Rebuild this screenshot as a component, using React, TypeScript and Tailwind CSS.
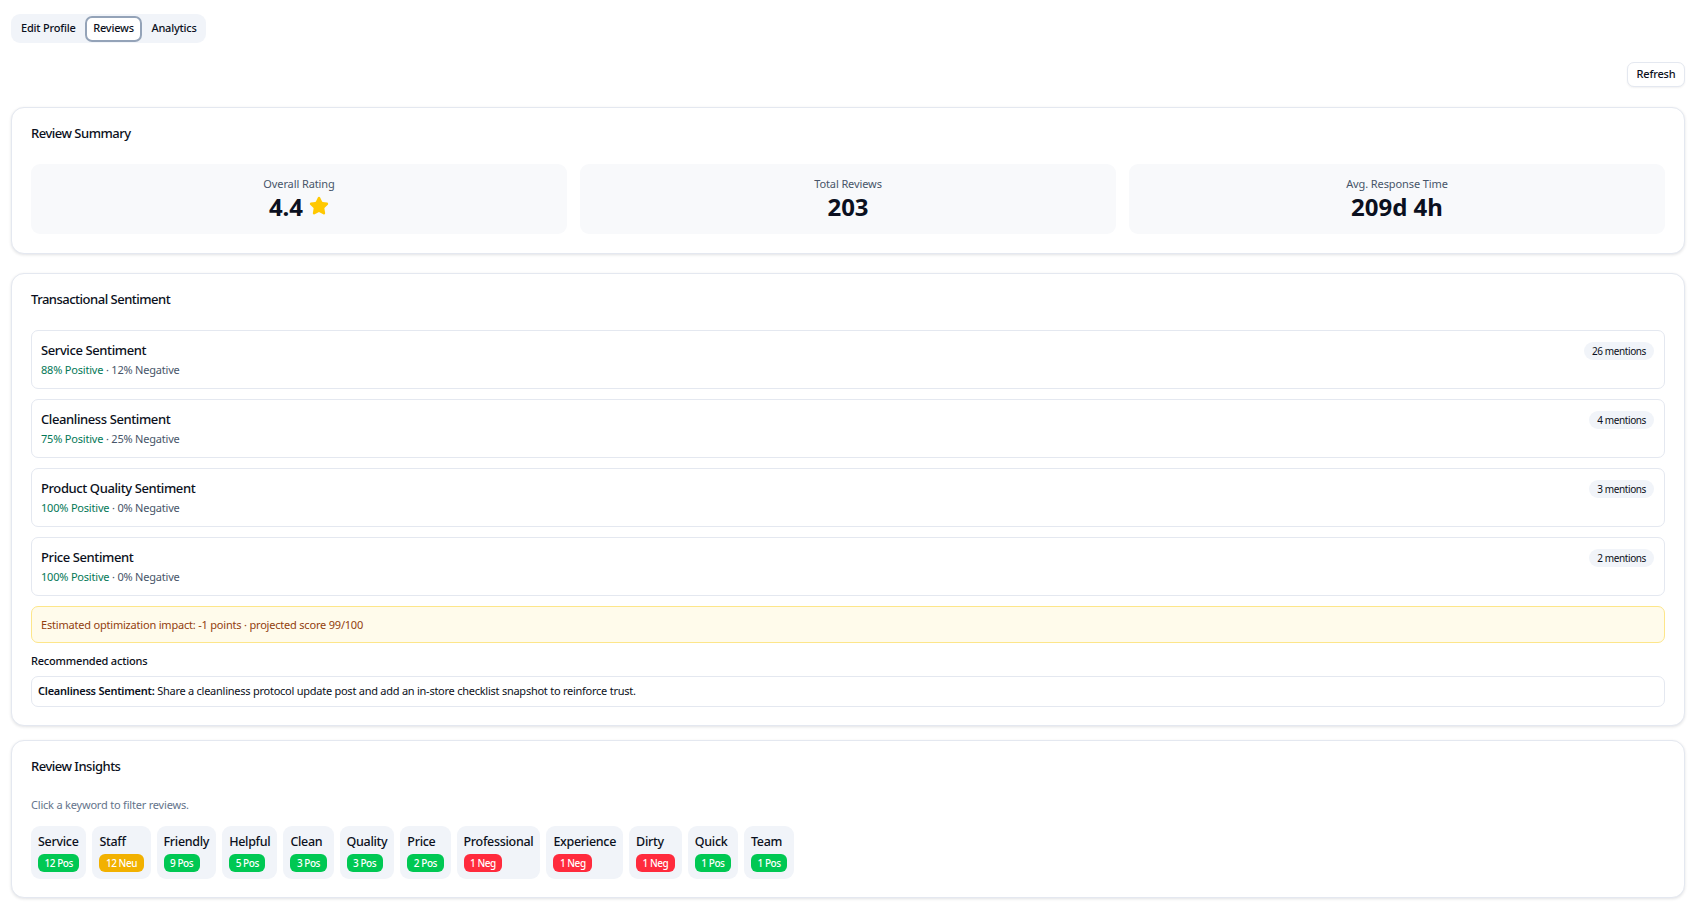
import { Star } from 'lucide-react';

const sentiments = [
  { name: 'Service Sentiment', pos: 88, neg: 12, mentions: 26 },
  { name: 'Cleanliness Sentiment', pos: 75, neg: 25, mentions: 4 },
  { name: 'Product Quality Sentiment', pos: 100, neg: 0, mentions: 3 },
  { name: 'Price Sentiment', pos: 100, neg: 0, mentions: 2 },
];

const keywords = [
  { word: 'Service', label: '12 Pos', tone: 'pos' },
  { word: 'Staff', label: '12 Neu', tone: 'neu' },
  { word: 'Friendly', label: '9 Pos', tone: 'pos' },
  { word: 'Helpful', label: '5 Pos', tone: 'pos' },
  { word: 'Clean', label: '3 Pos', tone: 'pos' },
  { word: 'Quality', label: '3 Pos', tone: 'pos' },
  { word: 'Price', label: '2 Pos', tone: 'pos' },
  { word: 'Professional', label: '1 Neg', tone: 'neg' },
  { word: 'Experience', label: '1 Neg', tone: 'neg' },
  { word: 'Dirty', label: '1 Neg', tone: 'neg' },
  { word: 'Quick', label: '1 Pos', tone: 'pos' },
  { word: 'Team', label: '1 Pos', tone: 'pos' },
];

const toneClass: Record<string, string> = {
  pos: 'bg-[#00c853]',
  neu: 'bg-[#f2b100]',
  neg: 'bg-[#ff2b3d]',
};

function Card({ title, className, children }: { title: string; className?: string; children: React.ReactNode }) {
  return (
    <section className={`rounded-[13px] border border-[#e4e8f0] bg-white px-[19px] pt-[15px] shadow-[0_1px_3px_rgba(15,23,42,0.12)] ${className ?? ''}`}>
      <h2 className="text-[13px] leading-[20px] font-medium tracking-[-0.5px] text-[#0b1020]">{title}</h2>
      {children}
    </section>
  );
}

function Stat({ label, children }: { label: string; children: React.ReactNode }) {
  return (
    <div className="flex h-[70px] flex-col items-center rounded-[9px] bg-[#f8f9fb] pt-[11px]">
      <span className="text-[11px] leading-[18px] tracking-[-0.1px] text-[#475569]">{label}</span>
      <span className="flex items-center gap-[6px] text-[24px] leading-[28px] font-bold tracking-normal text-[#0b1020]">{children}</span>
    </div>
  );
}

export default function App() {
  return (
    <div className="min-h-screen bg-white pr-[13px] pl-[11px] pt-[14px] text-[11px] tracking-[-0.2px] text-[#0b1020] font-['Noto_Sans',sans-serif]">
      <div className="inline-flex h-[29px] items-center rounded-[9px] bg-[#f1f4f9] px-[1px]">
        <button type="button" className="px-[9px] pb-[2px] leading-[24px] font-medium">Edit Profile</button>
        <button type="button" className="h-[26px] rounded-[7px] bg-white px-[8.5px] pb-[2px] leading-[22px] font-medium ring-2 ring-[#94a3b8] ring-inset">Reviews</button>
        <button type="button" className="pr-[8px] pl-[9px] pb-[2px] leading-[24px] font-medium">Analytics</button>
      </div>

      <div className="mt-[19px] flex justify-end">
        <button type="button" className="h-[25px] w-[58px] rounded-[7px] border border-[#e4e8f0] bg-white font-medium shadow-[0_1px_2px_rgba(15,23,42,0.06)]">Refresh</button>
      </div>

      <Card title="Review Summary" className="mt-[20px] pb-[19px]">
        <div className="mt-[21px] grid grid-cols-3 gap-[13px]">
          <Stat label="Overall Rating">
            4.4
            <Star size={20} className="-translate-y-[1px] fill-[#ffc800] text-[#ffc800]" />
          </Stat>
          <Stat label="Total Reviews">203</Stat>
          <Stat label="Avg. Response Time">209d 4h</Stat>
        </div>
      </Card>

      <Card title="Transactional Sentiment" className="mt-[19px] pb-[18px]">
        <div className="mt-[21px] flex flex-col gap-[10px]">
          {sentiments.map((s) => (
            <div key={s.name} className="flex h-[59px] items-start justify-between rounded-[7px] border border-[#e4e8f0] px-[9px]">
              <div className="pt-[9px]">
                <p className="text-[13px] leading-[20px] font-medium tracking-[-0.4px]">{s.name}</p>
                <p className="mt-[1px] leading-[18px] text-[#475569]">
                  <span className="text-[#047857]">{s.pos}% Positive</span> · {s.neg}% Negative
                </p>
              </div>
              <span className="mt-[11px] mr-[1px] rounded-[9px] bg-[#f1f4f9] px-[8px] text-[10px] leading-[18px] tracking-[-0.4px]">{s.mentions} mentions</span>
            </div>
          ))}
        </div>
        <div className="mt-[10px] flex h-[37px] items-center rounded-[7px] border border-[#fde68a] bg-[#fffbeb] px-[9px] pt-[1px] text-[#92400e]">
          Estimated optimization impact: -1 points · projected score 99/100
        </div>
        <p className="mt-[9px] leading-[18px] font-medium">Recommended actions</p>
        <div className="mt-[6px] flex h-[31px] items-center rounded-[7px] border border-[#e4e8f0] px-[6px] tracking-[-0.25px]">
          <span>
            <strong className="font-semibold">Cleanliness Sentiment:</strong> Share a cleanliness protocol update post and add an in-store checklist snapshot to reinforce trust.
          </span>
        </div>
      </Card>

      <Card title="Review Insights" className="mt-[14px] pb-[18px]">
        <p className="mt-[20px] leading-[18px] text-[#64748b]">Click a keyword to filter reviews.</p>
        <div className="mt-[12px] flex gap-[6px]">
          {keywords.map((k) => (
            <button key={k.word} type="button" className="flex h-[53px] flex-col items-start rounded-[9px] bg-[#f1f4f9] px-[7px] pt-[6px]">
              <span className="text-[12.5px] leading-[20px] font-medium tracking-[-0.3px]">{k.word}</span>
              <span className={`mt-[2px] rounded-[6px] px-[6.5px] text-[10px] leading-[18px] font-medium tracking-[-0.45px] text-white ${toneClass[k.tone]}`}>{k.label}</span>
            </button>
          ))}
        </div>
      </Card>
    </div>
  );
}
